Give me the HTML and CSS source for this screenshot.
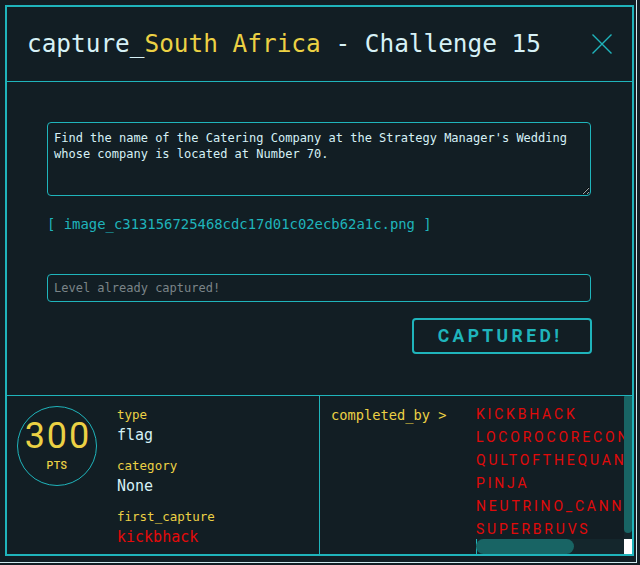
FILE: index.html
```html
<!DOCTYPE html>
<html lang="en">
<head>
<meta charset="utf-8">
<title>capture_South Africa - Challenge 15</title>
<link rel="stylesheet" href="styles.css">
</head>
<body>
<div class="modal">
  <div class="frame">
    <header class="head">
      <h1 class="title">capture_<span class="hl">South Africa</span> - Challenge 15</h1>
      <button class="close" aria-label="Close">
        <svg width="20" height="20" viewBox="0 0 20 20"><path d="M0.5 0.5 L19.5 19.5 M19.5 0.5 L0.5 19.5" stroke="#1fb4bb" stroke-width="1.4" fill="none"/></svg>
      </button>
    </header>
    <section class="body">
      <textarea class="desc" readonly>Find the name of the Catering Company at the Strategy Manager's Wedding whose company is located at Number 70.</textarea>
      <a class="file" href="#">[ image_c313156725468cdc17d01c02ecb62a1c.png ]</a>
      <input class="flag" type="text" placeholder="Level already captured!" disabled>
      <div class="actions"><button class="captured">CAPTURED!</button></div>
    </section>
    <section class="stats">
      <div class="info">
        <div class="points"><span class="num">300</span><span class="pts">PTS</span></div>
        <div class="meta">
          <div class="group"><div class="label">type</div><div class="value">flag</div></div>
          <div class="group"><div class="label">category</div><div class="value">None</div></div>
          <div class="group"><div class="label">first_capture</div><div class="value red">kickbhack</div></div>
        </div>
      </div>
      <div class="solvers">
        <div class="solvers-label">completed_by &gt;</div>
        <div class="solvers-box">
          <div class="viewport">
            <ul class="names">
              <li>KICKBHACK</li>
              <li>LOCOROCORECONTROL</li>
              <li>QULTOFTHEQUANTUM</li>
              <li>PINJA</li>
              <li>NEUTRINO_CANNON</li>
              <li>SUPERBRUVS</li>
            </ul>
          </div>
          <div class="vbar"><div class="vthumb"></div></div>
          <div class="hbar"><div class="hthumb"></div></div>
          <div class="corner"></div>
        </div>
      </div>
    </section>
  </div>
</div>
</body>
</html>
```
FILE: styles.css
```css
html, body {
  margin: 0;
  padding: 0;
  background: #121e24;
}
body {
  width: 640px;
  height: 565px;
  overflow: hidden;
  font-family: "DejaVu Sans Mono", monospace;
}
.modal {
  box-sizing: border-box;
  width: 637px;
  height: 563px;
  padding: 5px 2px 6px 5px;
  border-right: 1px solid #cfe9ee;
  border-bottom: 1px solid #cfe9ee;
}
.frame {
  box-sizing: border-box;
  height: 100%;
  border: 2px solid #1fb4bb;
  display: flex;
  flex-direction: column;
}
.head {
  box-sizing: border-box;
  height: 75px;
  flex: none;
  border-bottom: 1px solid #1fb4bb;
  display: flex;
  align-items: center;
  justify-content: space-between;
  padding: 0 20px 0 20px;
}
.title {
  margin: 0;
  font-family: "DejaVu Sans Mono", monospace;
  font-weight: normal;
  font-size: 24.4px;
  line-height: 30px;
  color: #d6f1f6;
  white-space: nowrap;
}
.hl { color: #ecd144; }
.close {
  background: none;
  border: 0;
  padding: 0;
  width: 20px;
  height: 20px;
  display: block;
}
.close svg { display: block; }
.body {
  box-sizing: border-box;
  flex: none;
  height: 314px;
  border-bottom: 1px solid #1fb4bb;
  padding: 40px 40px 0 40px;
  display: flex;
  flex-direction: column;
}
.desc {
  display: block;
  box-sizing: border-box;
  width: 544px;
  height: 74px;
  margin: 0;
  padding: 7px 6px;
  border: 1px solid #1fb4bb;
  border-radius: 4px;
  background: transparent;
  color: #d6f1f6;
  font-family: "DejaVu Sans Mono", monospace;
  font-size: 12px;
  line-height: 16px;
  outline: none;
  overflow: hidden;
}
.file {
  display: block;
  margin-top: 18px;
  font-size: 13.9px;
  line-height: 20px;
  color: #1fb4bb;
  text-decoration: none;
  white-space: nowrap;
}
.flag {
  box-sizing: border-box;
  width: 544px;
  height: 28px;
  margin: 40px 0 0 0;
  padding: 0 6px;
  border: 1px solid #1fb4bb;
  border-radius: 4px;
  background: transparent;
  font-family: "DejaVu Sans Mono", monospace;
  font-size: 12px;
  color: #d6f1f6;
}
.flag::placeholder { color: #7b8488; opacity: 1; }
.actions {
  margin-top: 16px;
  display: flex;
  justify-content: flex-end;
}
.captured {
  box-sizing: border-box;
  width: 180px;
  height: 36px;
  border: 2px solid #1fb4bb;
  border-radius: 4px;
  background: transparent;
  color: #1fb4bb;
  font-family: Roboto, "DejaVu Sans", sans-serif;
  font-weight: 700;
  font-size: 17.5px;
  letter-spacing: 3.4px;
  padding: 0 4px 0 0;
}
.stats {
  flex: 1;
  display: flex;
  min-height: 0;
}
.info {
  flex: none;
  border-right: 1px solid #1fb4bb;
  display: flex;
  gap: 20px;
  padding: 9px 10px 0 10px;
  box-sizing: content-box;
  width: 292px;
}
.points {
  box-sizing: border-box;
  width: 80px;
  height: 80px;
  margin-top: 1px;
  flex: none;
  border: 1px solid #1fb4bb;
  border-radius: 50%;
  display: flex;
  flex-direction: column;
  align-items: center;
  padding-top: 10px;
  color: #ecd144;
  font-family: Roboto, "DejaVu Sans", sans-serif;
}
.num {
  font-size: 36px;
  line-height: 38px;
  letter-spacing: 2px;
  padding-left: 2px;
}
.pts {
  margin-top: 5px;
  font-size: 10.5px;
  line-height: 12px;
  font-weight: 500;
  letter-spacing: 0.5px;
}
.meta {
  display: flex;
  flex-direction: column;
  gap: 11px;
  margin-top: 1px;
}
.label {
  font-size: 12.5px;
  line-height: 18px;
  color: #ecd144;
}
.value {
  font-size: 15px;
  line-height: 22px;
  color: #d6f1f6;
}
.red { color: #e50a0a; }
.solvers {
  flex: 1;
  display: flex;
  min-width: 0;
}
.solvers-label {
  box-sizing: border-box;
  width: 156px;
  flex: none;
  padding: 10px 0 0 11px;
  font-size: 13.7px;
  line-height: 18px;
  color: #ecd144;
  white-space: nowrap;
}
.solvers-box {
  flex: 1;
  min-width: 0;
  display: grid;
  grid-template-columns: 1fr 8px;
  grid-template-rows: 1fr 15px;
}
.viewport {
  overflow: hidden;
  min-width: 0;
  min-height: 0;
}
.vbar {
  background: #14262c;
}
.vthumb {
  height: 137px;
  background: #186464;
  border-radius: 1px 1px 4px 4px;
}
.hbar {
  background: #14262c;
  border-left: 1px solid #1fb4bb;
  display: flex;
}
.hthumb {
  width: 98px;
  height: 15px;
  margin-left: -1px;
  background: #186464;
  border-radius: 8px;
}
.corner {
  background: #ffffff;
}
.names {
  list-style: none;
  margin: 0;
  padding: 7px 0 6px 0;
  width: 220px;
  font-family: Roboto, "DejaVu Sans", sans-serif;
  font-size: 14px;
  line-height: 23px;
  letter-spacing: 2.8px;
  color: #e10a0a;
  white-space: nowrap;
}
```
